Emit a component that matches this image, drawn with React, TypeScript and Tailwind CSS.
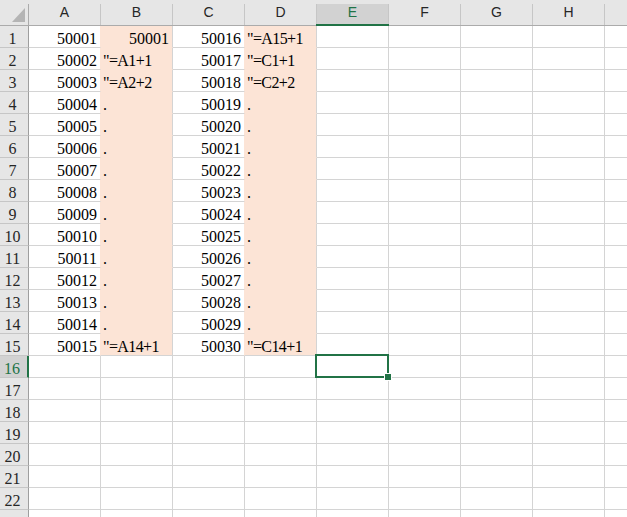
import React from "react";

const COLS = ["A", "B", "C", "D", "E", "F", "G", "H", "I"];
const ROWS = Array.from({ length: 23 }, (_, i) => i + 1);

function textFor(col: string, r: number): { t: string; right: boolean } | null {
  if (r > 15) return null;
  if (col === "A") return { t: String(50000 + r), right: true };
  if (col === "C") return { t: String(50015 + r), right: true };
  if (col === "B") {
    if (r === 1) return { t: "50001", right: true };
    if (r === 2) return { t: '"=A1+1', right: false };
    if (r === 3) return { t: '"=A2+2', right: false };
    if (r === 15) return { t: '"=A14+1', right: false };
    return { t: ".", right: false };
  }
  if (col === "D") {
    if (r === 1) return { t: '"=A15+1', right: false };
    if (r === 2) return { t: '"=C1+1', right: false };
    if (r === 3) return { t: '"=C2+2', right: false };
    if (r === 15) return { t: '"=C14+1', right: false };
    return { t: ".", right: false };
  }
  return null;
}

function Cell({ col, r }: { col: string; r: number }) {
  const inData = r <= 15;
  const filled = inData && (col === "B" || col === "D");
  const beforeFill = inData && (col === "A" || col === "C");
  const content = textFor(col, r);
  let cls = "flex h-[22px] w-[72px] shrink-0 items-end overflow-hidden whitespace-nowrap border-r border-b border-[#d4d4d4] leading-[16px] text-black";
  if (filled) cls += " bg-[#fce4d6]";
  if (filled && r < 15) cls += " border-b-[#fce4d6]";
  if (beforeFill) cls += " border-r-[#fce4d6]";
  if (content) {
    cls += content.right ? " justify-end pr-[3px]" : " justify-start pl-[2px] tracking-[-0.6px]";
  }
  return <div className={cls}>{content ? content.t : ""}</div>;
}

export default function App() {
  return (
    <div
      className="relative h-[517px] w-[627px] overflow-hidden bg-white text-[16px]"
      style={{ fontFamily: '"Liberation Serif", "Noto Sans CJK TC", serif' }}
    >
      {/* column headers */}
      <div className="flex h-[26px] border-b border-[#ababab] bg-[#e6e6e6]">
        <div className="relative mt-[4px] h-[21px] w-[29px] shrink-0 border-r border-[#ababab]">
          <svg className="absolute left-0 top-[-4px]" width="28" height="25" viewBox="0 0 28 25">
            <polygon points="12,22 25,22 25,8" fill="#b4b4b4" />
          </svg>
        </div>
        {COLS.map((c) => (
          <div
            key={c}
            className={
              c === "E"
                ? "relative mt-[4px] h-[21px] w-[72px] shrink-0 border-r border-[#c6c6c6] bg-[#d2d2d2] text-center text-[14px] leading-[17px] text-[#217346]"
                : "relative mt-[4px] h-[21px] w-[72px] shrink-0 border-r border-[#c6c6c6] text-center text-[14px] leading-[17px] text-[#262626]"
            }
            style={{ fontFamily: '"Liberation Sans", Arial, sans-serif' }}
          >
            {c === "I" ? "" : c}
            {c === "E" && (
              <div className="absolute bottom-[-1px] left-[-1px] right-[-1px] h-[2px] bg-[#217346]" />
            )}
          </div>
        ))}
      </div>

      {/* rows */}
      {ROWS.map((r) => (
        <div key={r} className="flex h-[22px]">
          <div
            className={
              r === 16
                ? "flex h-[22px] w-[29px] shrink-0 items-end justify-center border-r-2 border-b border-[#c6c6c6] border-r-[#217346] bg-[#d2d2d2] pr-[3px] leading-[16px] text-[#217346]"
                : "flex h-[22px] w-[29px] shrink-0 items-end justify-center border-r border-b border-[#c6c6c6] border-r-[#9e9e9e] bg-[#e6e6e6] pr-[3px] leading-[16px] text-[#262626]"
            }
          >
            {r === 23 ? "" : r}
          </div>
          {COLS.map((c) => (
            <Cell key={c} col={c} r={r} />
          ))}
        </div>
      ))}

      {/* selection box on E16 */}
      <div className="absolute left-[315px] top-[354px] h-[24px] w-[74px] border-2 border-[#217346]" />
      <div className="absolute left-[384px] top-[373px] h-[8px] w-[8px] border border-white bg-[#217346]" />
    </div>
  );
}
